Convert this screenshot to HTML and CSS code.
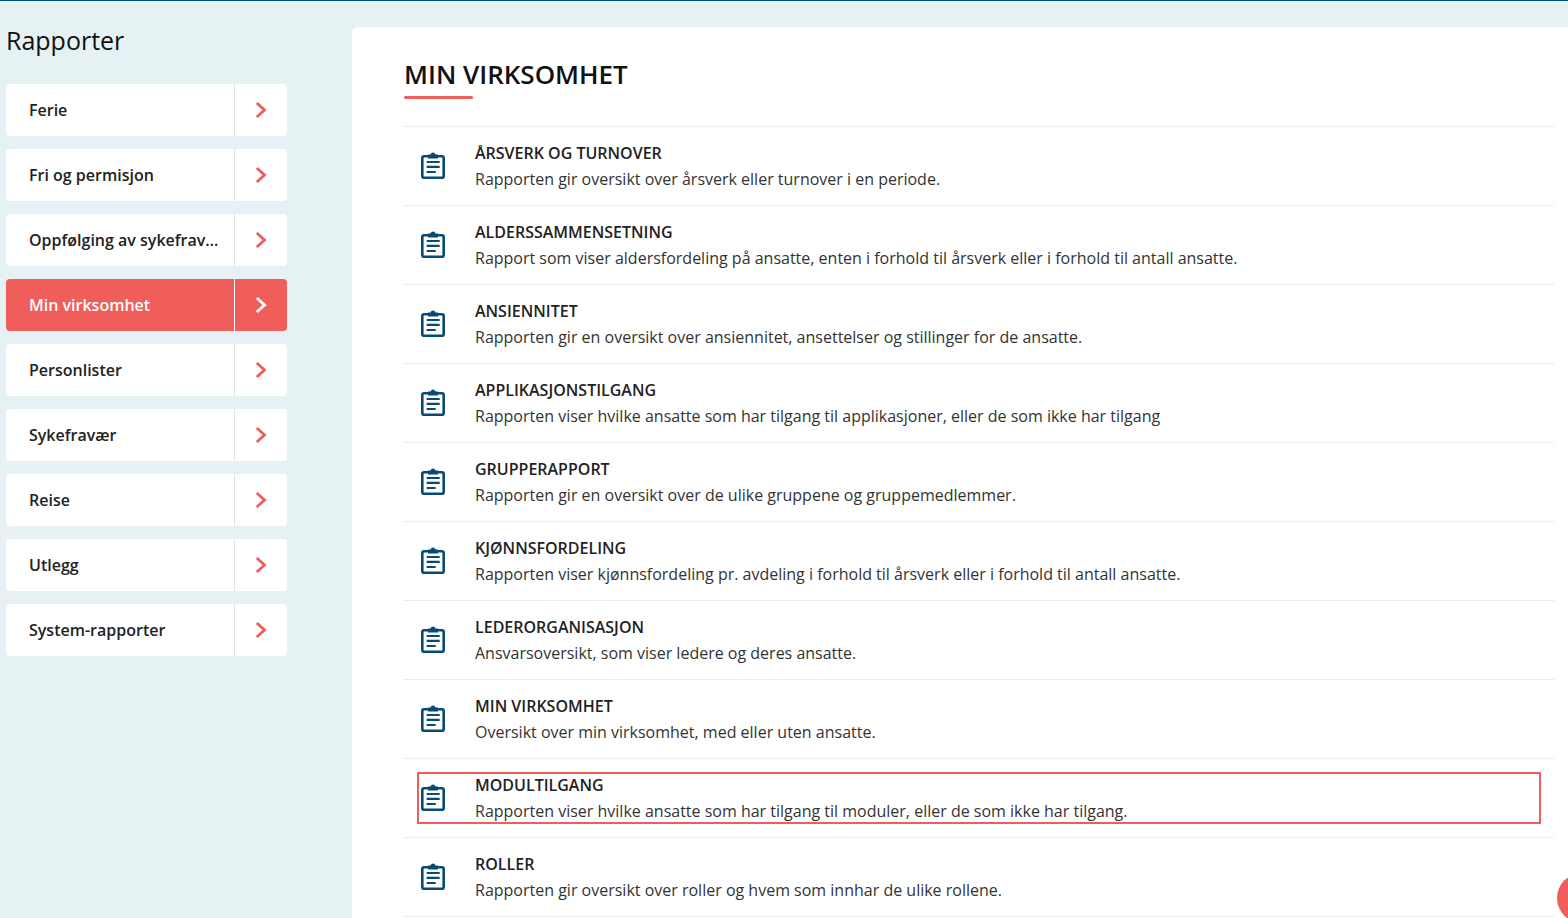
FILE: index.html
```html
<!DOCTYPE html>
<html lang="en">
<head>
    <meta charset="UTF-8">
    <meta name="viewport" content="width=device-width, initial-scale=1.0">
    <title>Rapporter</title>
    <link rel="stylesheet" href="styles.css">
</head>
<body>
    <svg class="icon-defs" width="0" height="0">
        <symbol id="report" viewBox="0 0 24 27">
            <rect x="1.300" y="4.300" width="21.400" height="21.400" rx="1.800" fill="none" stroke="currentColor" stroke-width="2.600"/>
            <path d="M7 6.500V2.500h2.500a2.600 2.600 0 0 1 5 0H17v4z" fill="currentColor"/>
            <path d="M5.700 10h13M5.700 14.800h13M5.700 20h9" fill="none" stroke="currentColor" stroke-width="2.200"/>
        </symbol>
        <symbol id="chevron" viewBox="0 0 12 16">
            <path d="M1.800 1l7.700 7-7.700 7" fill="none" stroke="currentColor" stroke-width="2.800"/>
        </symbol>
    </svg>

    <div class="page">
        <aside class="sidebar">
            <h2>Rapporter</h2>
            <ul class="menu">
                <li class="menu-item"><span class="menu-label">Ferie</span><span class="menu-arrow"><svg><use href="#chevron"/></svg></span></li>
                <li class="menu-item"><span class="menu-label">Fri og permisjon</span><span class="menu-arrow"><svg><use href="#chevron"/></svg></span></li>
                <li class="menu-item"><span class="menu-label">Oppfølging av sykefravær</span><span class="menu-arrow"><svg><use href="#chevron"/></svg></span></li>
                <li class="menu-item active"><span class="menu-label">Min virksomhet</span><span class="menu-arrow"><svg><use href="#chevron"/></svg></span></li>
                <li class="menu-item"><span class="menu-label">Personlister</span><span class="menu-arrow"><svg><use href="#chevron"/></svg></span></li>
                <li class="menu-item"><span class="menu-label">Sykefravær</span><span class="menu-arrow"><svg><use href="#chevron"/></svg></span></li>
                <li class="menu-item"><span class="menu-label">Reise</span><span class="menu-arrow"><svg><use href="#chevron"/></svg></span></li>
                <li class="menu-item"><span class="menu-label">Utlegg</span><span class="menu-arrow"><svg><use href="#chevron"/></svg></span></li>
                <li class="menu-item"><span class="menu-label">System-rapporter</span><span class="menu-arrow"><svg><use href="#chevron"/></svg></span></li>
            </ul>
        </aside>

        <main class="content">
            <h1>MIN VIRKSOMHET</h1>
            <ul class="reports">
                <li class="report">
                    <svg class="report-icon"><use href="#report"/></svg>
                    <div><h3>ÅRSVERK OG TURNOVER</h3><p>Rapporten gir oversikt over årsverk eller turnover i en periode.</p></div>
                </li>
                <li class="report">
                    <svg class="report-icon"><use href="#report"/></svg>
                    <div><h3>ALDERSSAMMENSETNING</h3><p>Rapport som viser aldersfordeling på ansatte, enten i forhold til årsverk eller i forhold til antall ansatte.</p></div>
                </li>
                <li class="report">
                    <svg class="report-icon"><use href="#report"/></svg>
                    <div><h3>ANSIENNITET</h3><p>Rapporten gir en oversikt over ansiennitet, ansettelser og stillinger for de ansatte.</p></div>
                </li>
                <li class="report">
                    <svg class="report-icon"><use href="#report"/></svg>
                    <div><h3>APPLIKASJONSTILGANG</h3><p>Rapporten viser hvilke ansatte som har tilgang til applikasjoner, eller de som ikke har tilgang</p></div>
                </li>
                <li class="report">
                    <svg class="report-icon"><use href="#report"/></svg>
                    <div><h3>GRUPPERAPPORT</h3><p>Rapporten gir en oversikt over de ulike gruppene og gruppemedlemmer.</p></div>
                </li>
                <li class="report">
                    <svg class="report-icon"><use href="#report"/></svg>
                    <div><h3>KJØNNSFORDELING</h3><p>Rapporten viser kjønnsfordeling pr. avdeling i forhold til årsverk eller i forhold til antall ansatte.</p></div>
                </li>
                <li class="report">
                    <svg class="report-icon"><use href="#report"/></svg>
                    <div><h3>LEDERORGANISASJON</h3><p>Ansvarsoversikt, som viser ledere og deres ansatte.</p></div>
                </li>
                <li class="report">
                    <svg class="report-icon"><use href="#report"/></svg>
                    <div><h3>MIN VIRKSOMHET</h3><p>Oversikt over min virksomhet, med eller uten ansatte.</p></div>
                </li>
                <li class="report marked">
                    <svg class="report-icon"><use href="#report"/></svg>
                    <div><h3>MODULTILGANG</h3><p>Rapporten viser hvilke ansatte som har tilgang til moduler, eller de som ikke har tilgang.</p></div>
                </li>
                <li class="report">
                    <svg class="report-icon"><use href="#report"/></svg>
                    <div><h3>ROLLER</h3><p>Rapporten gir oversikt over roller og hvem som innhar de ulike rollene.</p></div>
                </li>
            </ul>
        </main>
    </div>

    <div class="help-button"></div>
</body>
</html>
```

FILE: styles.css
```css
html, body {
    height: 100%;
    overflow: hidden;
}
body {
    margin: 0;
    background-color: #e5f1f3;
    border-top: 1px solid #004b7c;
    box-sizing: border-box;
    font-family: "Open Sans", sans-serif;
    color: #222;
}
ul {
    list-style: none;
    margin: 0;
    padding: 0;
}
.icon-defs {
    position: absolute;
}
.page {
    display: flex;
    height: 100%;
}
.sidebar {
    width: 281px;
    margin-left: 6px;
    flex-shrink: 0;
}
.sidebar h2 {
    margin: 22px 0 26px;
    font-size: 25px;
    font-weight: 400;
    line-height: 35px;
    color: #111;
}
.menu {
    display: flex;
    flex-direction: column;
    gap: 13px;
}
.menu-item {
    display: flex;
    height: 52px;
    background: #fff;
    border-radius: 4px;
    font-size: 16px;
    font-weight: 600;
}
.menu-label {
    flex: 1;
    min-width: 0;
    padding: 0 15px 0 23px;
    line-height: 52px;
    white-space: nowrap;
    overflow: hidden;
    text-overflow: ellipsis;
}
.menu-arrow {
    width: 52px;
    border-left: 1px solid #e2e2e2;
    display: flex;
    align-items: center;
    justify-content: center;
    color: #ef5e5b;
}
.menu-arrow svg {
    width: 12px;
    height: 16px;
}
.menu-item.active {
    background: #ef5e5b;
    color: #fff;
}
.menu-item.active .menu-arrow {
    color: #fff;
    border-left-color: #fff;
}
.content {
    flex: 1;
    margin: 26px 0 0 65px;
    padding: 0 14px 0 52px;
    background: #fff;
    border-top-left-radius: 6px;
}
.content h1 {
    position: relative;
    margin: 0 0 26px;
    padding: 27px 0 0;
    height: 46px;
    font-size: 26px;
    font-weight: 600;
    line-height: 40px;
    color: #111;
}
.content h1::after {
    content: "";
    position: absolute;
    left: 0;
    bottom: 1px;
    width: 69px;
    height: 3px;
    background: #ef5e5b;
    border-radius: 2px;
}
.reports {
    border-top: 1px solid #e4f0f0;
}
.report {
    position: relative;
    display: flex;
    align-items: center;
    height: 78px;
    border-bottom: 1px solid #e4f0f0;
}
.report-icon {
    width: 24px;
    height: 27px;
    margin: 0 30px 2px 17px;
    color: #064a75;
    flex-shrink: 0;
}
.report h3 {
    margin: 0;
    font-size: 16px;
    font-weight: 600;
    line-height: 26px;
}
.report p {
    margin: 0;
    font-size: 16px;
    line-height: 26px;
    color: #333;
}
.report.marked::after {
    content: "";
    position: absolute;
    left: 13px;
    right: 13px;
    top: 13px;
    height: 48px;
    border: 2px solid #ef5e5b;
}
.help-button {
    position: fixed;
    left: 1557px;
    top: 873px;
    width: 50px;
    height: 50px;
    border-radius: 50%;
    background: #ef5e5b;
}
```
